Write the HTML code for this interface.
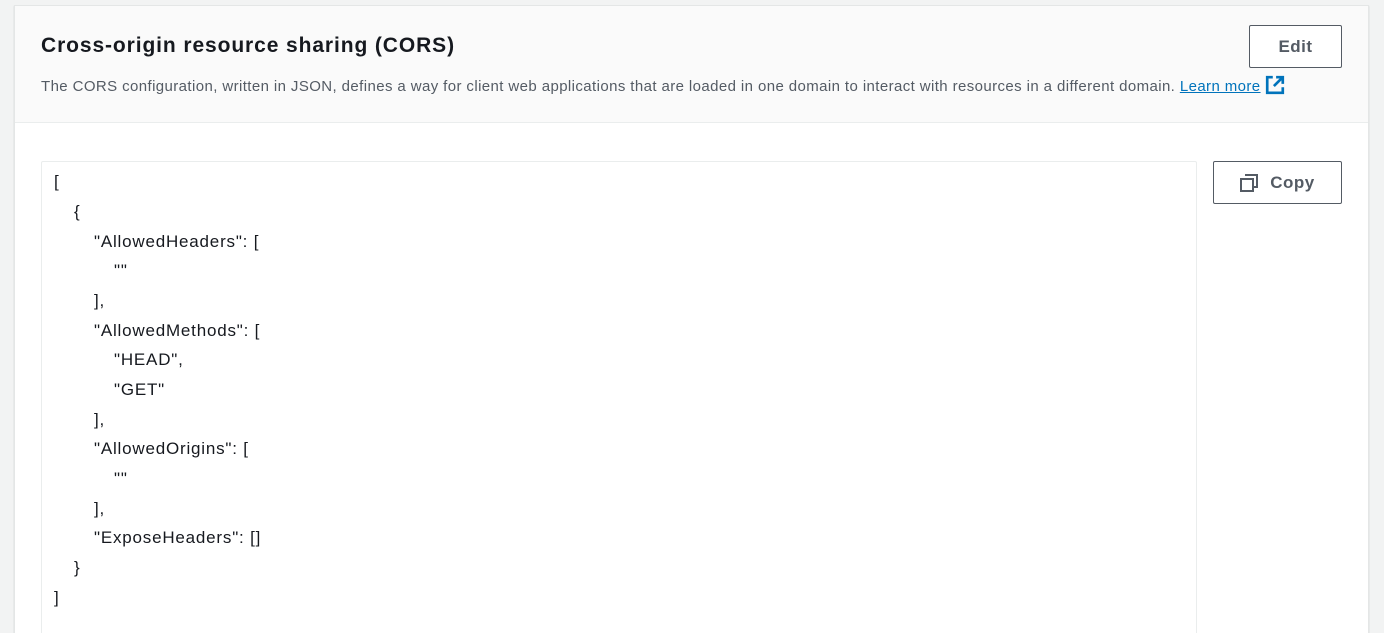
<!DOCTYPE html>
<html><head><style>
*{box-sizing:border-box;margin:0;padding:0}
html,body{width:1384px;height:633px;overflow:hidden}
body{background:#f2f3f3;font-family:"Liberation Sans",sans-serif;position:relative}
.panel{position:absolute;left:14px;top:5px;width:1355px;height:640px;background:#fff;border:1px solid #e4e6e6;box-shadow:0 1px 1px rgba(0,28,36,.2)}
.hdr{position:absolute;left:0;top:0;width:100%;height:117px;background:#fafafa;border-bottom:1px solid #eaeded}
h2{position:absolute;left:26px;top:28px;font-size:21px;letter-spacing:0.9px;font-weight:bold;color:#16191f}
.desc{position:absolute;left:26px;top:69px;font-size:15px;letter-spacing:0.4px;color:#545b64;white-space:nowrap}
.desc a{color:#0073bb;text-decoration:underline}
.btn{position:absolute;border:1px solid #545b64;border-radius:2px;background:#fff;color:#545b64;font-weight:bold;font-size:17px;letter-spacing:.5px;display:flex;align-items:center;justify-content:center}
.code{position:absolute;left:26px;top:155px;width:1156px;height:500px;border:1px solid #eaeded;border-radius:2px}
.code div{position:absolute;font-size:17px;letter-spacing:0.8px;color:#16191f;white-space:pre}
</style></head><body>
<div class="panel">
<div class="hdr">
<h2>Cross-origin resource sharing (CORS)</h2>
<div class="desc">The CORS configuration, written in JSON, defines a way for client web applications that are loaded in one domain to interact with resources in a different domain. <a>Learn more</a> <svg width="20" height="20" viewBox="0 0 18 18" style="vertical-align:-4px"><path d="M7 2H2v14h14v-5" fill="none" stroke="#0073bb" stroke-width="2.4"/><path d="M10 2h6v6M16 2L8 10" fill="none" stroke="#0073bb" stroke-width="2.4"/></svg></div>
</div>
<div class="btn" style="left:1234px;top:19px;width:93px;height:43px">Edit</div>
<div class="btn" style="left:1198px;top:155px;width:129px;height:43px"><svg width="18" height="18" viewBox="0 0 18 18" style="margin-right:12px"><path d="M5 1h12v12h-3" fill="none" stroke="#545b64" stroke-width="2"/><rect x="1" y="5" width="12" height="12" fill="none" stroke="#545b64" stroke-width="2"/></svg>Copy</div>
<div class="code">
<div style="left:12px;top:10px">[</div>
<div style="left:32px;top:40px">{</div>
<div style="left:52px;top:70px">"AllowedHeaders": [</div>
<div style="left:72px;top:99px">""</div>
<div style="left:52px;top:129px">],</div>
<div style="left:52px;top:159px">"AllowedMethods": [</div>
<div style="left:72px;top:188px">"HEAD",</div>
<div style="left:72px;top:218px">"GET"</div>
<div style="left:52px;top:248px">],</div>
<div style="left:52px;top:277px">"AllowedOrigins": [</div>
<div style="left:72px;top:307px">""</div>
<div style="left:52px;top:337px">],</div>
<div style="left:52px;top:366px">"ExposeHeaders": []</div>
<div style="left:32px;top:396px">}</div>
<div style="left:12px;top:426px">]</div>
</div>
</div>
</body></html>
